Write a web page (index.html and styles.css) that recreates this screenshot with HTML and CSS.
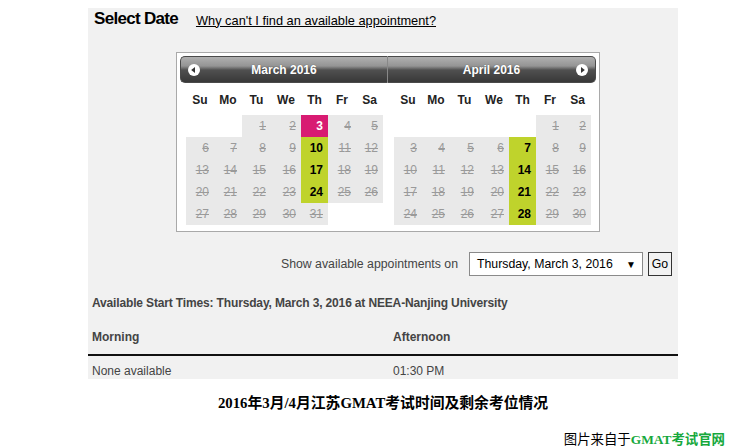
FILE: index.html
```html
<!DOCTYPE html>
<html>
<head>
<meta charset="utf-8">
<link rel="stylesheet" href="styles.css">
</head>
<body>
<div class="panel">
  <div class="head">
    <h2 class="title">Select Date</h2>
    <a class="why" href="#">Why can't I find an available appointment?</a>
  </div>
  <div class="cal">
    <div class="month">
      <div class="bar bar-l">
        <span class="nav"><svg width="12" height="12" viewBox="0 0 12 12"><circle cx="6" cy="6" r="6" fill="#fff"/><polygon points="3.2,6 7,3 7,9" fill="#333"/></svg></span>
        <span class="mname">March 2016</span>
        <span></span>
      </div>
      <div class="grid">
        <div class="dn">Su</div><div class="dn">Mo</div><div class="dn">Tu</div><div class="dn">We</div><div class="dn">Th</div><div class="dn">Fr</div><div class="dn">Sa</div>
        <div class="e"></div><div class="e"></div><div class="d">1</div><div class="d">2</div><div class="d sel">3</div><div class="d">4</div><div class="d">5</div>
        <div class="d">6</div><div class="d">7</div><div class="d">8</div><div class="d">9</div><div class="d ok">10</div><div class="d">11</div><div class="d">12</div>
        <div class="d">13</div><div class="d">14</div><div class="d">15</div><div class="d">16</div><div class="d ok">17</div><div class="d">18</div><div class="d">19</div>
        <div class="d">20</div><div class="d">21</div><div class="d">22</div><div class="d">23</div><div class="d ok">24</div><div class="d">25</div><div class="d">26</div>
        <div class="d">27</div><div class="d">28</div><div class="d">29</div><div class="d">30</div><div class="d">31</div><div class="e"></div><div class="e"></div>
      </div>
    </div>
    <div class="month">
      <div class="bar bar-r">
        <span></span>
        <span class="mname">April 2016</span>
        <span class="nav"><svg width="12" height="12" viewBox="0 0 12 12"><circle cx="6" cy="6" r="6" fill="#fff"/><polygon points="8.8,6 5,3 5,9" fill="#333"/></svg></span>
      </div>
      <div class="grid">
        <div class="dn">Su</div><div class="dn">Mo</div><div class="dn">Tu</div><div class="dn">We</div><div class="dn">Th</div><div class="dn">Fr</div><div class="dn">Sa</div>
        <div class="e"></div><div class="e"></div><div class="e"></div><div class="e"></div><div class="e"></div><div class="d">1</div><div class="d">2</div>
        <div class="d">3</div><div class="d">4</div><div class="d">5</div><div class="d">6</div><div class="d ok">7</div><div class="d">8</div><div class="d">9</div>
        <div class="d">10</div><div class="d">11</div><div class="d">12</div><div class="d">13</div><div class="d ok">14</div><div class="d">15</div><div class="d">16</div>
        <div class="d">17</div><div class="d">18</div><div class="d">19</div><div class="d">20</div><div class="d ok">21</div><div class="d">22</div><div class="d">23</div>
        <div class="d">24</div><div class="d">25</div><div class="d">26</div><div class="d">27</div><div class="d ok">28</div><div class="d">29</div><div class="d">30</div>
      </div>
    </div>
  </div>
  <div class="show">
    <span class="show-label">Show available appointments on</span>
    <div class="selectbox"><span>Thursday, March 3, 2016</span><span class="arrow">▼</span></div>
    <button class="go">Go</button>
  </div>
  <div class="avail">Available Start Times: Thursday, March 3, 2016 at NEEA-Nanjing University</div>
  <div class="times">
    <div class="th">Morning</div><div class="th">Afternoon</div>
    <div class="td">None available</div><div class="td">01:30 PM</div>
  </div>
</div>
<div class="caption">2016年3月/4月江苏GMAT考试时间及剩余考位情况</div>
<div class="credit">图片来自于<span class="src">GMAT考试官网</span></div>
</body>
</html>
```
FILE: styles.css
```css
html, body {
  margin: 0;
  padding: 0;
  background: #fff;
  font-family: "Liberation Sans", Arial, sans-serif;
}
.panel {
  margin: 8px 0 0 88px;
  width: 590px;
  height: 371px;
  background: #f1f1f1;
  overflow: hidden;
}
.head {
  display: flex;
  align-items: center;
  height: 22px;
  padding-left: 6px;
}
.title {
  margin: 0;
  font-size: 17px;
  font-weight: bold;
  letter-spacing: -0.7px;
  color: #000;
}
.why {
  margin-left: 18px;
  font-size: 12.8px;
  color: #000;
  text-decoration: underline;
  padding-top: 2px;
}
.cal {
  margin: 22px 0 0 88px;
  width: 416px;
  padding: 3px 3px 6px 3px;
  border: 1px solid #a9a9a9;
  background: #fff;
  display: flex;
}
.month {
  width: 208px;
}
.bar {
  height: 25px;
  display: grid;
  grid-template-columns: 26px 1fr 26px;
  align-items: center;
  justify-items: center;
  background: linear-gradient(to bottom, #b0b0b0 0%, #949494 36%, #505050 52%, #383838 100%);
  border: 1px solid #4a4a4a;
}
.bar-l {
  border-radius: 5px 0 0 5px;
  border-right: 1px solid #888;
}
.bar-r {
  border-radius: 0 5px 5px 0;
  border-left: 0;
}
.nav {
  display: flex;
  width: 12px;
  height: 12px;
}
.mname {
  color: #fff;
  font-size: 12px;
  font-weight: bold;
  text-shadow: 0 0 1px #444;
}
.grid {
  margin-left: 6px;
  display: grid;
  grid-template-columns: 28px 28px 29px 30px 27px 28px 27px;
  grid-template-rows: 32px repeat(5, 22px);
  font-size: 12px;
}
.dn {
  text-align: center;
  line-height: 32px;
  font-weight: bold;
  color: #222;
  padding-top: 1px;
}
.d {
  background: #e9e9e9;
  color: #9a9a9a;
  text-decoration: line-through;
  text-align: right;
  padding-right: 5px;
  line-height: 22px;
}
.d.ok {
  background: #bfd32c;
  color: #000;
  font-weight: bold;
  text-decoration: none;
}
.d.sel {
  background: #d81b72;
  color: #fff;
  font-weight: bold;
  text-decoration: none;
}
.show {
  margin-top: 20px;
  display: flex;
  justify-content: flex-end;
  align-items: center;
  padding-right: 6px;
  height: 24px;
}
.show-label {
  font-size: 12.3px;
  color: #444;
  margin-right: 11px;
}
.selectbox {
  box-sizing: border-box;
  width: 174px;
  height: 24px;
  border: 1px solid #8a8a8a;
  background: #fff;
  display: flex;
  align-items: center;
  justify-content: space-between;
  padding: 0 6px 0 7px;
  font-size: 12.3px;
  color: #000;
}
.arrow {
  font-size: 10px;
}
.go {
  box-sizing: border-box;
  margin-left: 5px;
  width: 24px;
  height: 24px;
  border: 1px solid #333;
  background: #f2f2f2;
  font-family: "Liberation Sans", Arial, sans-serif;
  font-size: 12.3px;
  padding: 0;
  color: #000;
}
.avail {
  margin-top: 19px;
  padding-left: 4px;
  font-size: 12px;
  font-weight: bold;
  letter-spacing: -0.15px;
  color: #444;
  line-height: 16px;
}
.times {
  margin-top: 18px;
  display: grid;
  grid-template-columns: 301px 1fr;
  font-size: 12px;
  color: #444;
}
.th {
  font-weight: bold;
  padding-left: 4px;
  line-height: 16px;
  padding-bottom: 9px;
  border-bottom: 2px solid #111;
}
.td {
  padding-left: 4px;
  line-height: 16px;
  padding-top: 7px;
}
.caption {
  margin-top: 16px;
  text-align: center;
  width: 766px;
  font-family: "Liberation Serif", "Noto Sans CJK SC", serif;
  font-weight: bold;
  font-size: 14.8px;
  color: #000;
  line-height: 16px;
}
.credit {
  margin-top: 19px;
  text-align: right;
  padding-right: 15px;
  font-family: "Noto Sans CJK SC", sans-serif;
  font-size: 13.4px;
  line-height: 16px;
  color: #000;
}
.src {
  color: #16a83c;
  font-weight: bold;
  font-family: "Liberation Serif", "Noto Sans CJK SC", serif;
}
```
